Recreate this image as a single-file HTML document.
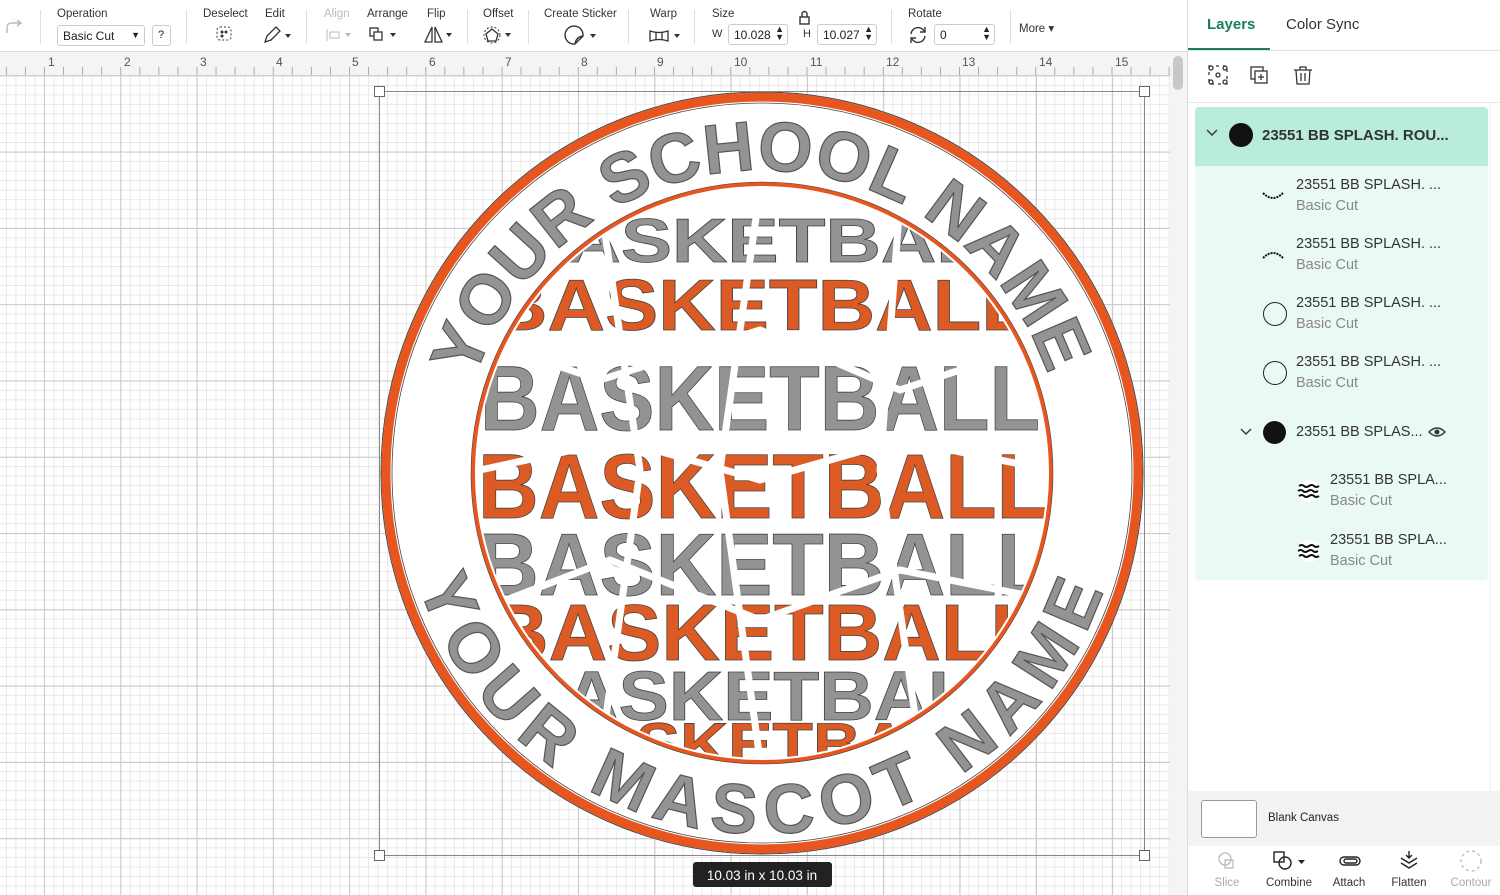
<!DOCTYPE html>
<html><head><meta charset="utf-8"><style>
*{margin:0;padding:0;box-sizing:border-box}
body{width:1500px;height:895px;overflow:hidden;font-family:"Liberation Sans",sans-serif;background:#fff;position:relative;color:#222}
.tb{position:absolute;left:0;top:0;width:1188px;height:52px;background:#fff;border-bottom:1px solid #ddd}
.lbl{position:absolute;top:8px;font-size:11.5px;color:#333}
.sep{position:absolute;top:10px;width:1px;height:34px;background:#ddd}
.ic{position:absolute;font-size:12px;color:#333}
.inp{position:absolute;height:21px;border:1px solid #ccc;border-radius:3px;font-size:12px;padding:3px 0 0 5px;background:#fff}
.ruler{position:absolute;left:0;top:52px;width:1170px;height:24px;background:#f4f4f4;border-bottom:1px solid #ccc}
.rn{position:absolute;top:3px;font-size:12px;color:#555}
.canvas{position:absolute;left:0;top:76px;width:1170px;height:819px;
background-color:#fff;
background-image:linear-gradient(90deg,#c9c9c9 1px,transparent 1px),linear-gradient(#c9c9c9 1px,transparent 1px),linear-gradient(90deg,#e8e8e8 1px,transparent 1px),linear-gradient(#e8e8e8 1px,transparent 1px);
background-size:76.3px 76.3px,76.3px 76.3px,9.54px 9.54px,9.54px 9.54px;
background-position:44px 0,0 -0.7px,44px 0,0 -0.7px}
.panel{position:absolute;left:1187px;top:0;width:313px;height:895px;background:#fff;border-left:1px solid #ddd}
.row{position:absolute;left:108px;font-size:14.5px;color:#333;line-height:21px}
.row span{color:#888}
.bt{position:absolute;top:877px;font-size:11.5px;color:#333;text-align:center;width:60px}
</style></head><body>
<div class="tb">
 <svg style="position:absolute;left:4px;top:20px" width="20" height="16"><path d="M3 13 V7 a4 4 0 0 1 4-4 H17 M13 0 l4 3 -4 3" fill="none" stroke="#bbb" stroke-width="1.5"/></svg>
 <div class="sep" style="left:40px"></div>
 <div class="lbl" style="left:57px">Operation</div>
 <div class="inp" style="left:57px;top:25px;width:88px">Basic Cut<span style="position:absolute;right:4px;font-size:9px;top:4px">▼</span></div>
 <div class="inp" style="left:152px;top:25px;width:19px;font-size:11px">?</div>
 <div class="sep" style="left:186px"></div>
 <div class="lbl" style="left:203px">Deselect</div>
 <svg style="position:absolute;left:215px;top:25px" width="20" height="18"><rect x="2" y="2" width="14" height="13" rx="3" fill="none" stroke="#333" stroke-dasharray="2 2"/><circle cx="7" cy="7" r="1.5" fill="#333"/><circle cx="11" cy="7" r="1.5" fill="#333"/><circle cx="7" cy="11" r="1.5" fill="#333"/></svg>
 <div class="lbl" style="left:265px">Edit</div>
 <svg style="position:absolute;left:262px;top:25px" width="32" height="20"><path d="M3 17 l2-6 9-9 4 4-9 9z" fill="none" stroke="#333" stroke-width="1.3"/><path d="M23 9 h6 l-3 4z" fill="#333"/></svg>
 <div class="sep" style="left:306px"></div>
 <div class="lbl" style="left:324px;color:#bbb">Align</div>
 <svg style="position:absolute;left:325px;top:27px" width="28" height="16"><path d="M2 2v12" stroke="#bbb"/><rect x="5" y="5" width="9" height="6" fill="none" stroke="#bbb"/><path d="M20 6h6l-3 4z" fill="#bbb"/></svg>
 <div class="lbl" style="left:367px">Arrange</div>
 <svg style="position:absolute;left:368px;top:26px" width="32" height="18"><rect x="2" y="2" width="8" height="8" fill="none" stroke="#333" stroke-width="1.3"/><rect x="6" y="6" width="8" height="8" fill="#fff" stroke="#333" stroke-width="1.3"/><path d="M22 7h6l-3 4z" fill="#333"/></svg>
 <div class="lbl" style="left:427px">Flip</div>
 <svg style="position:absolute;left:423px;top:25px" width="32" height="20"><path d="M9 2 L2 17 H9Z M12 2 L19 17 H12Z" fill="none" stroke="#333" stroke-width="1.3"/><path d="M23 8h6l-3 4z" fill="#333"/></svg>
 <div class="sep" style="left:467px"></div>
 <div class="lbl" style="left:483px">Offset</div>
 <svg style="position:absolute;left:483px;top:25px" width="32" height="20"><path d="M9 4 L15 9 L13 16 H5 L3 9Z" fill="none" stroke="#333" stroke-width="1.3"/><circle cx="9" cy="10" r="8" fill="none" stroke="#333" stroke-dasharray="2 2"/><path d="M22 8h6l-3 4z" fill="#333"/></svg>
 <div class="sep" style="left:528px"></div>
 <div class="lbl" style="left:544px">Create Sticker</div>
 <svg style="position:absolute;left:564px;top:25px" width="36" height="22"><path d="M11 19 A9 9 0 1 1 19 11 L11 19Z M11 19 Q12 12 19 11" fill="none" stroke="#333" stroke-width="1.4"/><path d="M26 9h6l-3 4z" fill="#333"/></svg>
 <div class="sep" style="left:628px"></div>
 <div class="lbl" style="left:650px">Warp</div>
 <svg style="position:absolute;left:648px;top:28px" width="36" height="16"><path d="M2 3 Q11 6 20 3 V13 Q11 10 2 13Z M8 5v7 M14 5v7" fill="none" stroke="#333" stroke-width="1.3"/><path d="M26 6h6l-3 4z" fill="#333"/></svg>
 <div class="sep" style="left:694px"></div>
 <div class="lbl" style="left:712px">Size</div>
 <svg style="position:absolute;left:797px;top:10px" width="16" height="16"><rect x="3" y="7" width="9" height="7" fill="none" stroke="#333" stroke-width="1.4"/><path d="M5 7V4a2.5 2.5 0 0 1 5 0v3" fill="none" stroke="#333" stroke-width="1.4"/></svg>
 <div class="ic" style="left:712px;top:28px;font-size:11px">W</div>
 <div class="inp" style="left:728px;top:24px;width:60px">10.028<span style="position:absolute;right:3px;top:0;font-size:9px;line-height:8px">▲<br>▼</span></div>
 <div class="ic" style="left:803px;top:28px;font-size:11px">H</div>
 <div class="inp" style="left:817px;top:24px;width:60px">10.027<span style="position:absolute;right:3px;top:0;font-size:9px;line-height:8px">▲<br>▼</span></div>
 <div class="sep" style="left:891px"></div>
 <div class="lbl" style="left:908px">Rotate</div>
 <svg style="position:absolute;left:908px;top:25px" width="22" height="20"><path d="M3 9 A7 7 0 0 1 16 6 M17 11 A7 7 0 0 1 4 14" fill="none" stroke="#333" stroke-width="1.4"/><path d="M17 2v5h-5 M3 18v-5h5" fill="none" stroke="#333" stroke-width="1.4"/></svg>
 <div class="inp" style="left:934px;top:24px;width:61px">0<span style="position:absolute;right:3px;top:0;font-size:9px;line-height:8px">▲<br>▼</span></div>
 <div class="sep" style="left:1010px"></div>
 <div class="ic" style="left:1019px;top:21px;font-size:11.5px">More ▾</div>
</div>
<div class="ruler">
 <div class="rn" style="left:48px">1</div><div class="rn" style="left:124px">2</div><div class="rn" style="left:200px">3</div><div class="rn" style="left:276px">4</div><div class="rn" style="left:352px">5</div><div class="rn" style="left:429px">6</div><div class="rn" style="left:505px">7</div><div class="rn" style="left:581px">8</div><div class="rn" style="left:657px">9</div><div class="rn" style="left:734px">10</div><div class="rn" style="left:810px">11</div><div class="rn" style="left:886px">12</div><div class="rn" style="left:962px">13</div><div class="rn" style="left:1039px">14</div><div class="rn" style="left:1115px">15</div>
 <div style="position:absolute;left:0;bottom:0;width:100%;height:8px;background-image:linear-gradient(90deg,#aaa 1px,transparent 1px);background-size:19.07px 8px;background-position:44px 0"></div>
</div>
<div style="position:absolute;left:1170px;top:52px;width:17px;height:843px;background:#f4f4f4"></div>
<div style="position:absolute;left:1173px;top:56px;width:10px;height:34px;border-radius:5px;background:#c8c8c8"></div>
<div class="canvas"></div>

<svg style="position:absolute;left:0;top:0" width="1170" height="895">
<defs>
 <clipPath id="cp"><circle cx="762" cy="473" r="285"/></clipPath>
 <path id="top" d="M474.6 379.5 A302 302 0 0 1 1049.4 379.5"/>
 <path id="bot" d="M418.7 584.5 A361 361 0 0 0 1105.3 584.5"/>
</defs>
<circle cx="762" cy="473" r="381" fill="#fff" stroke="#444" stroke-width="1"/>
<circle cx="762" cy="473" r="376" fill="none" stroke="#e8561f" stroke-width="9"/>
<circle cx="762" cy="473" r="370" fill="none" stroke="#444" stroke-width="0.8"/>
<circle cx="762" cy="473" r="289" fill="none" stroke="#e8561f" stroke-width="4"/>
<circle cx="762" cy="473" r="291" fill="none" stroke="#444" stroke-width="0.6"/>
<g font-family="Liberation Sans" font-weight="bold" font-size="70" fill="#939393" stroke="#555" stroke-width="1.2">
 <text><textPath href="#top" textLength="755" lengthAdjust="spacing">YOUR SCHOOL NAME</textPath></text>
 <text><textPath href="#bot" textLength="900" lengthAdjust="spacing">YOUR MASCOT NAME</textPath></text>
</g>
<g clip-path="url(#cp)" font-family="Liberation Sans" font-weight="bold" stroke="#444" stroke-width="0.8">
 <text x="510" y="262" font-size="62" fill="#939393" textLength="520" lengthAdjust="spacingAndGlyphs">BASKETBALL</text>
 <text x="490" y="330" font-size="72" fill="#dc5b25" textLength="540" lengthAdjust="spacingAndGlyphs">BASKETBALL</text>
 <text x="480" y="430" font-size="92" fill="#939393" textLength="560" lengthAdjust="spacingAndGlyphs">BASKETBALL</text>
 <text x="478" y="518" font-size="92" fill="#dc5b25" textLength="570" lengthAdjust="spacingAndGlyphs">BASKETBALL</text>
 <text x="478" y="595" font-size="88" fill="#939393" textLength="570" lengthAdjust="spacingAndGlyphs">BASKETBALL</text>
 <text x="490" y="660" font-size="80" fill="#dc5b25" textLength="550" lengthAdjust="spacingAndGlyphs">BASKETBALL</text>
 <text x="510" y="720" font-size="70" fill="#939393" textLength="510" lengthAdjust="spacingAndGlyphs">BASKETBALL</text>
 <text x="540" y="765" font-size="60" fill="#dc5b25" textLength="450" lengthAdjust="spacingAndGlyphs">BASKETBALL</text>
 <g stroke="#fff" stroke-width="7" fill="none">
  <path d="M480 340 L600 380 L760 330 L900 390 L1050 340"/>
  <path d="M480 470 L620 440 L760 480 L900 440 L1050 470"/>
  <path d="M480 610 L610 560 L760 620 L900 570 L1050 600"/>
  <path d="M600 200 L640 470 L600 760 M760 190 L720 470 L760 760 M900 200 L880 470 L920 750"/>
 </g>
</g>
<rect x="379.5" y="91.5" width="765" height="764" fill="none" stroke="#888" stroke-width="1"/>
<g fill="#fff" stroke="#666"><rect x="374.5" y="86.5" width="10" height="10"/><rect x="1139.5" y="86.5" width="10" height="10"/><rect x="374.5" y="850.5" width="10" height="10"/><rect x="1139.5" y="850.5" width="10" height="10"/></g>
<rect x="693" y="862" width="139" height="25" rx="3" fill="#222"/>
<text x="762" y="880" text-anchor="middle" fill="#fff" font-family="Liberation Sans" font-size="13.5">10.03  in x 10.03  in</text>
</svg>

<div class="panel">
 <div style="position:absolute;left:19px;top:16px;font-size:15px;font-weight:bold;color:#1a7f56">Layers</div>
 <div style="position:absolute;left:98px;top:16px;font-size:15px;color:#333">Color Sync</div>
 <div style="position:absolute;left:0;top:48px;width:82px;height:3px;background:#1a7f56"></div>
 <div style="position:absolute;left:0;top:50px;width:313px;height:1px;background:#e2e2e2"></div>
 <svg style="position:absolute;left:20px;top:65px" width="110" height="22">
  <g fill="none" stroke="#333" stroke-width="1.3"><rect x="1" y="1" width="18" height="18" stroke-dasharray="3 4"/><circle cx="3" cy="3" r="2"/><circle cx="17" cy="3" r="2"/><circle cx="3" cy="17" r="2"/><circle cx="17" cy="17" r="2"/><circle cx="10" cy="10" r="2"/>
  <rect x="43" y="2" width="12" height="12"/><rect x="47" y="6" width="12" height="12" fill="#fff"/><path d="M53 9v6 M50 12h6"/>
  <path d="M86 5h18 M92 5V2h6v3 M88 5l1 14h12l1-14 M93 8v8 M97 8v8"/></g></svg>
 <div style="position:absolute;left:0;top:102px;width:313px;height:1px;background:#e6e6e6"></div>
 <div style="position:absolute;left:302px;top:103px;width:1px;height:700px;background:#eee"></div>
 <div style="position:absolute;left:7px;top:107px;width:293px;height:473px;background:#ebf9f3;border-radius:4px"></div>
 <div style="position:absolute;left:7px;top:107px;width:293px;height:59px;background:#b9ecda;border-radius:4px 4px 0 0"></div>
 <svg style="position:absolute;left:17px;top:128px" width="14" height="10"><path d="M2 2l5 5 5-5" fill="none" stroke="#333" stroke-width="1.4"/></svg>
 <div style="position:absolute;left:41px;top:123px;width:24px;height:24px;border-radius:50%;background:#111"></div>
 <div style="position:absolute;left:74px;top:127px;font-size:15px;font-weight:bold;color:#333">23551 BB SPLASH. ROU...</div>
 <svg style="position:absolute;left:72px;top:183px" width="26" height="26"><path d="M3 10 Q13 20 23 10" fill="none" stroke="#111" stroke-width="2" stroke-dasharray="2 1"/></svg>
 <div class="row" style="top:175px">23551 BB SPLASH. ...<br><span>Basic Cut</span></div>
 <svg style="position:absolute;left:72px;top:243px" width="26" height="26"><path d="M3 15 Q13 5 23 15" fill="none" stroke="#111" stroke-width="2" stroke-dasharray="2 1"/></svg>
 <div class="row" style="top:234px">23551 BB SPLASH. ...<br><span>Basic Cut</span></div>
 <div style="position:absolute;left:75px;top:302px;width:24px;height:24px;border-radius:50%;border:1.3px solid #222"></div>
 <div class="row" style="top:293px">23551 BB SPLASH. ...<br><span>Basic Cut</span></div>
 <div style="position:absolute;left:75px;top:361px;width:24px;height:24px;border-radius:50%;border:1.3px solid #222"></div>
 <div class="row" style="top:352px">23551 BB SPLASH. ...<br><span>Basic Cut</span></div>
 <svg style="position:absolute;left:51px;top:427px" width="14" height="10"><path d="M2 2l5 5 5-5" fill="none" stroke="#333" stroke-width="1.4"/></svg>
 <div style="position:absolute;left:75px;top:421px;width:23px;height:23px;border-radius:50%;background:#111"></div>
 <div class="row" style="top:422px">23551 BB SPLAS...</div>
 <svg style="position:absolute;left:240px;top:426px" width="18" height="12"><path d="M1 6 Q9 -2 17 6 Q9 14 1 6Z" fill="none" stroke="#333" stroke-width="1.4"/><circle cx="9" cy="6" r="2.5" fill="#333"/></svg>
 <svg style="position:absolute;left:108px;top:478px" width="26" height="26"><circle cx="13" cy="13" r="11" fill="#fff"/><g fill="none" stroke="#111" stroke-width="2"><path d="M3 8 q3-2 5 0 t5 0 t5 0 t5 0 M2 13 q3-2 5 0 t5 0 t5 0 t5 0 M3 18 q3-2 5 0 t5 0 t5 0 t5 0"/></g></svg>
 <div class="row" style="top:470px;left:142px">23551 BB SPLA...<br><span>Basic Cut</span></div>
 <svg style="position:absolute;left:108px;top:538px" width="26" height="26"><circle cx="13" cy="13" r="11" fill="#fff"/><g fill="none" stroke="#111" stroke-width="2"><path d="M3 8 q3-2 5 0 t5 0 t5 0 t5 0 M2 13 q3-2 5 0 t5 0 t5 0 t5 0 M3 18 q3-2 5 0 t5 0 t5 0 t5 0"/></g></svg>
 <div class="row" style="top:530px;left:142px">23551 BB SPLA...<br><span>Basic Cut</span></div>
 <div style="position:absolute;left:0;top:791px;width:313px;height:55px;background:#f3f3f3"></div>
 <div style="position:absolute;left:13px;top:800px;width:56px;height:38px;background:#fff;border:1px solid #999;border-radius:3px"></div>
 <div style="position:absolute;left:80px;top:812px;font-size:11.5px;color:#222">Blank Canvas</div>
 <svg style="position:absolute;left:0;top:848px" width="313" height="28">
  <g fill="none" stroke="#bbb" stroke-width="1.3"><circle cx="37" cy="11" r="6"/><rect x="37" y="12" width="8" height="8"/><circle cx="283" cy="13" r="10" stroke-dasharray="3 3"/></g>
  <g fill="none" stroke="#222" stroke-width="1.4"><rect x="86" y="4" width="10" height="10"/><circle cx="97" cy="15" r="6"/><rect x="152" y="9" width="20" height="8" rx="4"/><rect x="156" y="11" width="13" height="4" rx="2"/><path d="M221 3v7 M218 7l3 3 3-3 M213 10l8 5 8-5 M213 15l8 5 8-5"/></g>
  <path d="M110 12h7l-3.5 4z" fill="#222"/>
 </svg>
 <div class="bt" style="left:9px;color:#aaa">Slice</div>
 <div class="bt" style="left:71px">Combine</div>
 <div class="bt" style="left:131px">Attach</div>
 <div class="bt" style="left:191px">Flatten</div>
 <div class="bt" style="left:253px;color:#aaa">Contour</div>
</div>
</body></html>
